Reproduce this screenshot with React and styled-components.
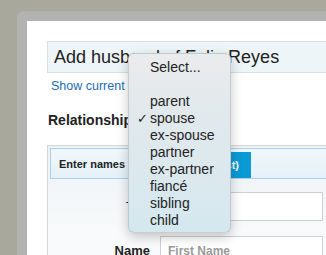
import React from "react";
import styled, { createGlobalStyle } from "styled-components";

const Global = createGlobalStyle`
  html, body {
    margin: 0;
    padding: 0;
    background: #a8a89c;
    overflow: hidden;
    font-family: "Liberation Sans", Arial, sans-serif;
  }
`;

const Stage = styled.div`
  position: relative;
  width: 326px;
  height: 255px;
  overflow: hidden;
  padding: 11px 0 0 17px;
  box-sizing: border-box;
`;

const Dialog = styled.div`
  width: 420px;
  height: 320px;
  border: 10px solid #b2b2b2;
  border-right: none;
  border-bottom: none;
  border-top-left-radius: 7px;
  background: #fff;
  padding: 20px 0 0 20px;
`;

const Title = styled.h1`
  margin: 0;
  height: 32px;
  box-sizing: border-box;
  border: 1px solid #d8e0e4;
  background: #eef5f8;
  padding-left: 6px;
  font-size: 18px;
  font-weight: normal;
  line-height: 30px;
  color: #222;
`;

const Link = styled.a`
  display: block;
  margin-top: 6px;
  font-size: 12.5px;
  line-height: 15px;
  color: #1d6db6;
  padding-left: 4px;
`;

const RelRow = styled.div`
  display: flex;
  align-items: center;
  margin-top: 18px;
  padding-left: 1px;
  font-size: 14px;
  font-weight: bold;
  color: #222;
  height: 16px;
`;

const Section = styled.div`
  margin-top: 17px;
  border: 1px solid #d4d6d8;
  padding: 2px;
  background: linear-gradient(#eef2f5, #f8fafb 90px);
  height: 140px;
`;

const Header = styled.div`
  display: flex;
  align-items: flex-end;
  height: 31px;
  box-sizing: border-box;
  border: 1px solid #a9d3ea;
  background: linear-gradient(#f0f7fb, #e4f1f8);
  padding-left: 8px;
`;

const HeaderText = styled.span`
  align-self: center;
  width: 108px;
  font-size: 11px;
  font-weight: bold;
  color: #222;
  white-space: nowrap;
`;

const FormatButton = styled.span`
  display: flex;
  align-items: center;
  justify-content: flex-end;
  width: 84px;
  box-sizing: border-box;
  height: 26px;
  padding: 0 12px;
  background: #0a9ad6;
  color: #fff;
  font-size: 11px;
  font-weight: bold;
  white-space: nowrap;
`;

const Fields = styled.div`
  display: grid;
  grid-template-columns: 100px 163px;
  column-gap: 10px;
  row-gap: 15px;
  align-items: center;
  margin-top: 13px;
`;

const Label = styled.label`
  text-align: right;
  font-size: 13px;
  font-weight: ${(p) => (p.$bold ? "bold" : "normal")};
  color: #222;
`;

const Input = styled.div`
  height: 29px;
  box-sizing: border-box;
  border: 1px solid #cfcfcf;
  background: #fff;
  padding-left: 7px;
  display: flex;
  align-items: center;
  font-size: 12px;
  font-weight: bold;
  color: #9a9a9a;
`;

const Menu = styled.ul`
  position: absolute;
  left: 128px;
  top: 53px;
  width: 103px;
  height: 180px;
  box-sizing: border-box;
  margin: 0;
  padding: 5px 0 0;
  list-style: none;
  border-radius: 6px;
  border: 1px solid rgba(0, 0, 0, 0.13);
  background: linear-gradient(#ebebec 0%, #e2e9ec 30%, #d5e8ef 100%);
  box-shadow: 0 4px 12px rgba(0, 0, 0, 0.22);
`;

const Item = styled.li`
  position: relative;
  height: 17px;
  line-height: 17px;
  padding-left: 21px;
  font-size: 14px;
  color: #222;
`;

const Check = styled.span`
  position: absolute;
  left: 8px;
  top: 0;
  font-size: 13px;
`;

const options = ["Select...", "", "parent", "spouse", "ex-spouse", "partner", "ex-partner", "fiancé", "sibling", "child"];

export default function App() {
  return (
    <Stage>
      <Global />
      <Dialog>
        <Title>Add husband of Felix Reyes</Title>
        <Link>Show current family</Link>
        <RelRow>Relationship</RelRow>
        <Section>
          <Header>
            <HeaderText>Enter names in</HeaderText>
            <FormatButton>(first, last)</FormatButton>
          </Header>
          <Fields>
            <Label>Title</Label>
            <Input />
            <Label $bold>Name</Label>
            <Input>First Name</Input>
          </Fields>
        </Section>
      </Dialog>
      <Menu>
        {options.map((o, i) => (
          <Item key={i}>
            {o === "spouse" && <Check>✓</Check>}
            {o || "\u00a0"}
          </Item>
        ))}
      </Menu>
    </Stage>
  );
}
